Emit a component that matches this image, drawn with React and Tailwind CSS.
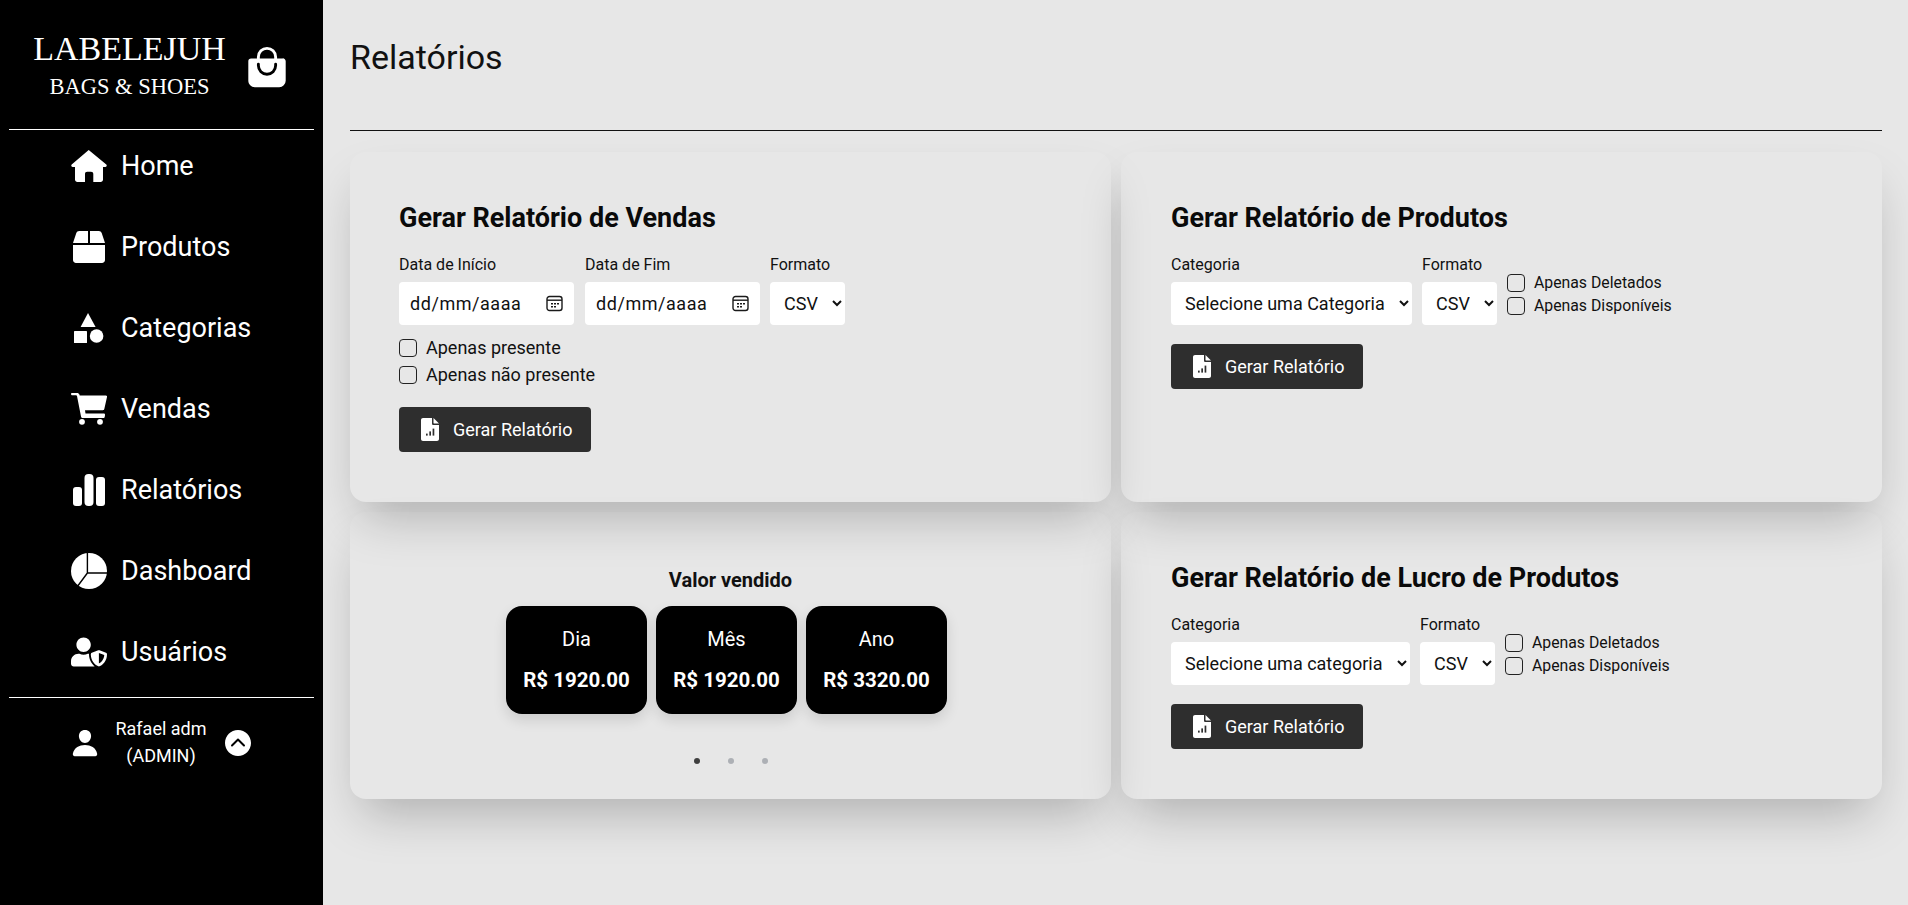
import React from 'react';
import { IoBagHandle, IoPerson, IoChevronUpCircle } from 'react-icons/io5';
import { FaBox, FaUserShield } from 'react-icons/fa';

function HomeIcon() {
  return (
    <svg width="36" height="32" viewBox="0 0 36 32" fill="white">
      <path d="M17.7 0L35.3 14.6C36.2 15.4 35.6 17 34.4 17H32V29.5C32 31 31 32 29.5 32H22.3V24C22.3 22.6 21.4 21.7 20 21.7H16.2C14.9 21.7 14 22.6 14 24V32H6.5C5 32 4 31 4 29.5V17H1.6C.4 17-.2 15.4.7 14.6Z" />
    </svg>
  );
}

function ShapesIcon() {
  return (
    <svg width="30" height="30" viewBox="0 0 30 30" fill="white">
      <path d="M14 0l7.6 14H6.6z" />
      <rect x="0" y="18" width="13" height="12" rx="0.6" />
      <circle cx="22.6" cy="23" r="6.8" />
    </svg>
  );
}

function CartIcon() {
  return (
    <svg width="36" height="32" viewBox="0 0 36 32" fill="white">
      <path d="M.8 0H6C7.2 0 8 .6 8.4 1.6L8.7 2.5H34.8C35.7 2.5 36.2 3.3 36 4L33.3 16C33.1 16.8 32.6 17.2 31.8 17.2H14L14.5 20.5H32.5C33.7 20.5 34.2 21.2 34 22.2L33.7 24C33.6 24.6 33 25 32.4 25H12C11 25 10.2 24.4 10 23.4L6 3C5.9 2.5 5.5 2.2 5 2.2H.8C-.2 2.2-.2 0 .8 0Z" />
      <circle cx="11" cy="28.8" r="2.9" />
      <circle cx="29" cy="28.8" r="2.9" />
    </svg>
  );
}

function BarsIcon() {
  return (
    <svg width="32" height="32" viewBox="0 0 32 32" fill="white">
      <rect x="0" y="13" width="9" height="19" rx="3" />
      <rect x="11.5" y="0" width="9" height="32" rx="4" />
      <rect x="23" y="3" width="9" height="29" rx="3" />
    </svg>
  );
}

function PieIcon() {
  return (
    <svg width="36" height="36" viewBox="0 0 36 36">
      <circle cx="18" cy="18" r="18" fill="white" />
      <path d="M16.4 0v20H36M16.4 20L6 34" fill="none" stroke="black" strokeWidth="1.4" />
    </svg>
  );
}

function DocIcon() {
  return (
    <svg width="18" height="23" viewBox="0 0 18 23" fill="white" className="shrink-0">
      <path d="M2 0H11V5.5C11 6.5 11.7 7 12.5 7H18V21C18 22.2 17 23 16 23H2C.9 23 0 22 0 21V2C0 .9.9 0 2 0Z" />
      <path d="M12.5 0L18 5.5H13C12.7 5.5 12.5 5.3 12.5 5Z" />
      <rect x="5" y="15.6" width="1.7" height="2" fill="#2e2e2e" />
      <rect x="8.3" y="13.4" width="1.7" height="4.2" fill="#2e2e2e" />
      <rect x="11.6" y="10.6" width="1.7" height="7" fill="#2e2e2e" />
    </svg>
  );
}

const nav = [
  ['Home', <HomeIcon />],
  ['Produtos', <FaBox className="text-[32px]" />],
  ['Categorias', <ShapesIcon />],
  ['Vendas', <CartIcon />],
  ['Relatórios', <BarsIcon />],
  ['Dashboard', <PieIcon />],
  ['Usuários', <FaUserShield className="text-[36px]" />],
];

function CalIcon() {
  return (
    <svg width="17" height="17" viewBox="0 0 17 17" fill="none" className="shrink-0">
      <rect x="1" y="1.5" width="15" height="14" rx="2.5" stroke="#1a1a1a" strokeWidth="1.4" />
      <path d="M1 5.2h15" stroke="#1a1a1a" strokeWidth="1.4" />
      <path d="M5 8h2v1.6H5zM8 8h2v1.6H8zM11 8h2v1.6h-2zM5 11h2v1.6H5zM8 11h2v1.6H8z" fill="#1a1a1a" />
    </svg>
  );
}

function DateField({ label }) {
  return (
    <div className="flex flex-col w-[175px]">
      <span className="text-base leading-[24px] mb-[5px]">{label}</span>
      <div className="h-[43px] bg-white rounded-[4px] flex items-center justify-between pl-[11px] pr-[11px] text-[18px] tracking-[0.55px]">
        <span>dd/mm/aaaa</span>
        <CalIcon />
      </div>
    </div>
  );
}

function SelectField({ label, options }) {
  return (
    <div className="flex flex-col">
      <span className="text-base leading-[24px] mb-[5px]">{label}</span>
      <select className="h-[43px] bg-white rounded-[4px] pl-[10px] pr-[11px] text-[18px]">
        {options.map((o) => (
          <option key={o}>{o}</option>
        ))}
      </select>
    </div>
  );
}

function Check({ label, size }) {
  return (
    <label className={`flex items-center gap-[9px] ${size}`}>
      <input
        type="checkbox"
        className="appearance-none w-[18px] h-[18px] border-[1.5px] border-[#222] rounded-[4px] shrink-0"
      />
      <span>{label}</span>
    </label>
  );
}

function GenButton() {
  return (
    <button className="w-[192px] h-[45px] bg-[#2e2e2e] text-white rounded-[4px] flex items-center pl-[22px] gap-[14px] text-[18px] pb-[1px]">
      <DocIcon />
      <span>Gerar Relatório</span>
    </button>
  );
}

function CatCard({ title, placeholder, h }) {
  return (
    <section className={`${h} rounded-2xl shadow-2xl pl-[50px] pt-[48px]`}>
      <h2 className="text-[27px] leading-[36px] font-bold text-[#0a0a0a] mb-[17px]">{title}</h2>
      <div className="flex items-end gap-[10px]">
        <SelectField label="Categoria" options={[placeholder]} />
        <SelectField label="Formato" options={['CSV']} />
        <div className="flex flex-col gap-[5px] h-[41px] self-end mb-[10px]">
          <Check label="Apenas Deletados" size="text-[15.8px] leading-[18px]" />
          <Check label="Apenas Disponíveis" size="text-[15.8px] leading-[18px]" />
        </div>
      </div>
      <div className="mt-[19px]">
        <GenButton />
      </div>
    </section>
  );
}

function Stat({ label, value }) {
  return (
    <div className="w-[141px] h-[108px] bg-black text-white rounded-[16px] shadow-[0_6px_14px_rgba(0,0,0,0.12)] flex flex-col items-center pt-[20px]">
      <span className="text-[20px] leading-[26px]">{label}</span>
      <span className="text-[20.5px] leading-[26px] font-bold mt-[15px]">{value}</span>
    </div>
  );
}

export default function App() {
  return (
    <div className="flex h-screen overflow-hidden bg-[#e7e7e7] text-[#111] font-['Roboto',sans-serif]">
      <aside className="w-[323px] shrink-0 bg-black text-white flex flex-col px-[9px]">
        <div className="h-[129px] border-b border-white flex items-start shrink-0 box-content">
          <div className="w-[241px] pt-[30px] flex flex-col items-center font-['Liberation_Serif',serif]">
            <span className="text-[34px] leading-[38px]">LABELEJUH</span>
            <span className="text-[22.5px] leading-[26px] mt-[6px]">BAGS &amp; SHOES</span>
          </div>
          <IoBagHandle className="text-[46px] mt-[44px] ml-[-6px]" />
        </div>
        <nav className="flex flex-col gap-[21px] pt-[6px] pb-[15px] border-b border-white">
          {nav.map(([name, icon]) => (
            <div key={name} className="h-[60px] flex items-center">
              <div className="w-[112px] pl-[48px] flex justify-center items-center shrink-0">
                {icon}
              </div>
              <span className="text-[27px]">{name}</span>
            </div>
          ))}
        </nav>
        <div className="flex items-center pt-[19px] pl-[61px]">
          <IoPerson className="text-[30px] shrink-0" />
          <div className="w-[110px] text-center text-[18px] leading-[27px] ml-[6px] mt-[-2px]">
            <div>Rafael adm</div>
            <div>(ADMIN)</div>
          </div>
          <IoChevronUpCircle className="text-[32px] ml-[6px]" />
        </div>
      </aside>
      <main className="flex-1 pl-[27px] pr-[26px] min-w-0">
        <h1 className="text-[34px] leading-[40px] pt-[37px] h-[131px] border-b border-[#111] font-normal">Relatórios</h1>
        <div className="grid grid-cols-2 gap-[10px] mt-[21px]">
          <section className="h-[350px] rounded-2xl shadow-2xl pl-[49px] pt-[48px]">
            <h2 className="text-[27px] leading-[36px] font-bold text-[#0a0a0a] mb-[17px]">Gerar Relatório de Vendas</h2>
            <div className="flex items-end">
              <DateField label="Data de Início" />
              <div className="ml-[11px]">
                <DateField label="Data de Fim" />
              </div>
              <div className="ml-[10px]">
                <SelectField label="Formato" options={['CSV']} />
              </div>
            </div>
            <div className="flex flex-col gap-[9px] mt-[14px]">
              <Check label="Apenas presente" size="text-[18px] leading-[18px]" />
              <Check label="Apenas não presente" size="text-[18px] leading-[18px]" />
            </div>
            <div className="mt-[23px]">
              <GenButton />
            </div>
          </section>
          <CatCard title="Gerar Relatório de Produtos" placeholder="Selecione uma Categoria" h="h-[350px]" />
          <section className="h-[287px] rounded-2xl shadow-2xl flex flex-col items-center pt-[56px]">
            <h3 className="text-[20px] leading-[24px] font-bold text-[#111] mb-[14px]">Valor vendido</h3>
            <div className="flex gap-[9px] mr-[8px]">
              <Stat label="Dia" value="R$ 1920.00" />
              <Stat label="Mês" value="R$ 1920.00" />
              <Stat label="Ano" value="R$ 3320.00" />
            </div>
            <div className="flex gap-[28px] mt-[44px]">
              <span className="w-[6px] h-[6px] rounded-full bg-[#3f3f3f]" />
              <span className="w-[6px] h-[6px] rounded-full bg-[#adb0b5]" />
              <span className="w-[6px] h-[6px] rounded-full bg-[#adb0b5]" />
            </div>
          </section>
          <CatCard title="Gerar Relatório de Lucro de Produtos" placeholder="Selecione uma categoria" h="h-[287px]" />
        </div>
      </main>
    </div>
  );
}
